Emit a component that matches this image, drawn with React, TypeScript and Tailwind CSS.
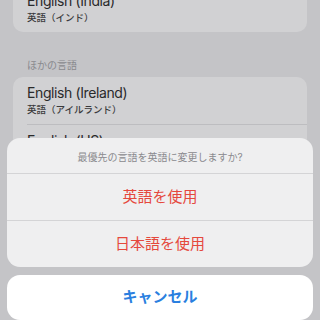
const font = { fontFamily: 'Inter, "Noto Sans CJK JP", sans-serif' };

function Row({ title, sub }: { title: string; sub: string }) {
  return (
    <div className="flex flex-col gap-[2px] px-[14px] pt-[7px] pb-[8px]">
      <div className="text-[14px] leading-[17px] tracking-[-0.4px] text-[#2a2a2b]">{title}</div>
      <div className="text-[9.5px] leading-[13px] font-medium text-[#3a3a3c]">{sub}</div>
    </div>
  );
}

export default function App() {
  return (
    <div className="relative h-[320px] w-[320px] overflow-hidden bg-[#c4c4c7]" style={font}>
      <div className="flex flex-col px-[13px]">
        <div className="mt-[-15px] rounded-[10px] bg-[#d1d1d3]">
          <Row title="English (India)" sub="英語（インド）" />
        </div>
        <div className="mt-[27px] mb-[5px] px-[14px] text-[10px] leading-[13px] text-[#89898d]">ほかの言語</div>
        <div className="rounded-[10px] bg-[#d1d1d3]">
          <Row title="English (Ireland)" sub="英語（アイルランド）" />
          <div className="ml-[14px] h-px bg-[#bdbdc0]" />
          <Row title="English (US)" sub="英語（アメリカ合衆国）" />
        </div>
      </div>

      <div className="absolute left-[7px] right-[7px] top-[138px] flex flex-col gap-[8px]">
        <div className="overflow-hidden rounded-[13px] bg-[#efeff0]">
          <div className="flex h-[35px] items-center justify-center pt-[3px] text-[10px] text-[#8a8a8e]">
            最優先の言語を英語に変更しますか?
          </div>
          <div className="h-px bg-[#d4d4d6]" />
          <div className="flex h-[46px] items-center justify-center text-[15px] text-[#e5483d]">英語を使用</div>
          <div className="h-px bg-[#d4d4d6]" />
          <div className="flex h-[46px] items-center justify-center text-[15px] text-[#e5483d]">日本語を使用</div>
        </div>
        <div className="flex h-[45px] items-center justify-center rounded-[13px] bg-white text-[15px] font-bold text-[#2a7fdf]">
          キャンセル
        </div>
      </div>
    </div>
  );
}
